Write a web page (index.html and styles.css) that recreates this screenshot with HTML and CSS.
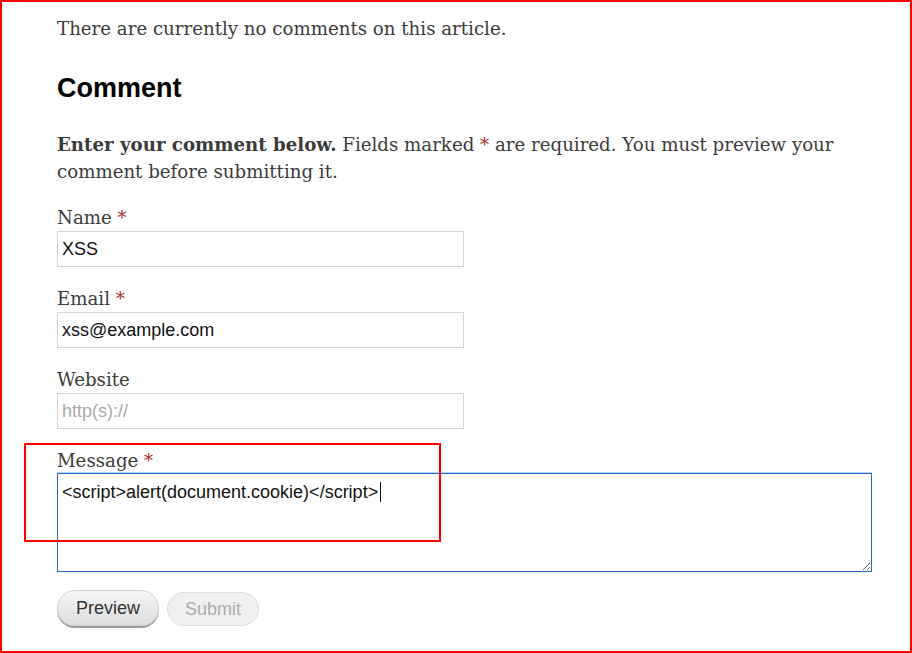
FILE: index.html
```html
<!DOCTYPE html>
<html lang="en">
<head>
  <meta charset="UTF-8">
  <title>Comment</title>
  <link rel="stylesheet" href="styles.css">
</head>
<body>
  <div class="frame">
    <div class="content">
      <p class="no-comments">There are currently no comments on this article.</p>

      <h2>Comment</h2>

      <p class="intro"><strong>Enter your comment below.</strong> Fields marked <span class="req">*</span> are required. You must preview your comment before submitting it.</p>

      <div class="field">
        <label for="name">Name <span class="req">*</span></label>
        <input type="text" id="name" value="XSS">
      </div>

      <div class="field">
        <label for="email">Email <span class="req">*</span></label>
        <input type="text" id="email" value="xss@example.com">
      </div>

      <div class="field">
        <label for="website">Website</label>
        <input type="text" id="website" placeholder="http(s)://">
      </div>

      <div class="field">
        <label>Message <span class="req">*</span></label>
        <div class="message">&lt;script&gt;alert(document.cookie)&lt;/script&gt;<span class="caret"></span></div>
      </div>

      <div class="actions">
        <button class="btn">Preview</button>
        <button class="btn" disabled>Submit</button>
      </div>
    </div>

    <div class="highlight"></div>
  </div>
</body>
</html>
```

FILE: styles.css
```css
body {
  margin: 0;
  background: #fff;
}

.frame {
  position: relative;
  box-sizing: border-box;
  width: 912px;
  height: 653px;
  border: 2px solid #f00;
  overflow: hidden;
}

.content {
  width: 815px;
  padding: 13px 0 0 55px;
  font-family: "DejaVu Serif", serif;
  font-size: 18.2px;
  line-height: 27px;
  color: #3b3b3b;
}

p {
  margin: 0;
}

h2 {
  margin: 30px 0 27px;
  font-family: "Liberation Sans", Arial, sans-serif;
  font-size: 27px;
  line-height: 32px;
  font-weight: bold;
  color: #000;
}

.intro {
  margin-bottom: 19px;
}

.intro strong {
  font-weight: bold;
}

.req {
  color: #a52a2a;
}

.field {
  margin-bottom: 18px;
}

.field label {
  display: block;
}

.field input {
  display: block;
  box-sizing: border-box;
  width: 407px;
  height: 36px;
  margin: 0;
  padding: 0 4px;
  border: 1px solid #d4d4d4;
  border-radius: 0;
  font-family: "Liberation Sans", Arial, sans-serif;
  font-size: 18px;
  color: #111;
  background: #fff;
}

.field input::placeholder {
  color: #a8a8a8;
}

.message {
  box-sizing: border-box;
  width: 815px;
  height: 99px;
  margin-top: -1px;
  padding: 6px 4px;
  border: 1px solid #2a64c5;
  box-shadow: 0 -1px 0 #b6d8f7;
  font-family: "Liberation Sans", Arial, sans-serif;
  font-size: 18px;
  line-height: 24px;
  color: #111;
  resize: vertical;
  overflow: auto;
}

.caret {
  display: inline-block;
  width: 1px;
  height: 20px;
  margin-left: 2px;
  vertical-align: -4px;
  background: #111;
}

.actions {
  display: flex;
  align-items: flex-start;
  gap: 8px;
  margin-top: 18px;
}

.btn {
  height: 36px;
  padding: 0 18px;
  border: 1px solid #d0d0d0;
  border-radius: 20px;
  background: linear-gradient(#f5f5f5, #dedede);
  box-shadow: 0 2px 0 #9c9c9c;
  font-family: "Liberation Sans", Arial, sans-serif;
  font-size: 18px;
  color: #333;
}

.btn:disabled {
  margin-top: 2px;
  height: 34px;
  padding: 0 17px;
  background: #f0f0f0;
  box-shadow: none;
  border-color: #ddd;
  color: #ababab;
}

.highlight {
  position: absolute;
  left: 22px;
  top: 441px;
  box-sizing: border-box;
  width: 417px;
  height: 99px;
  border: 2px solid #f00;
}
```
